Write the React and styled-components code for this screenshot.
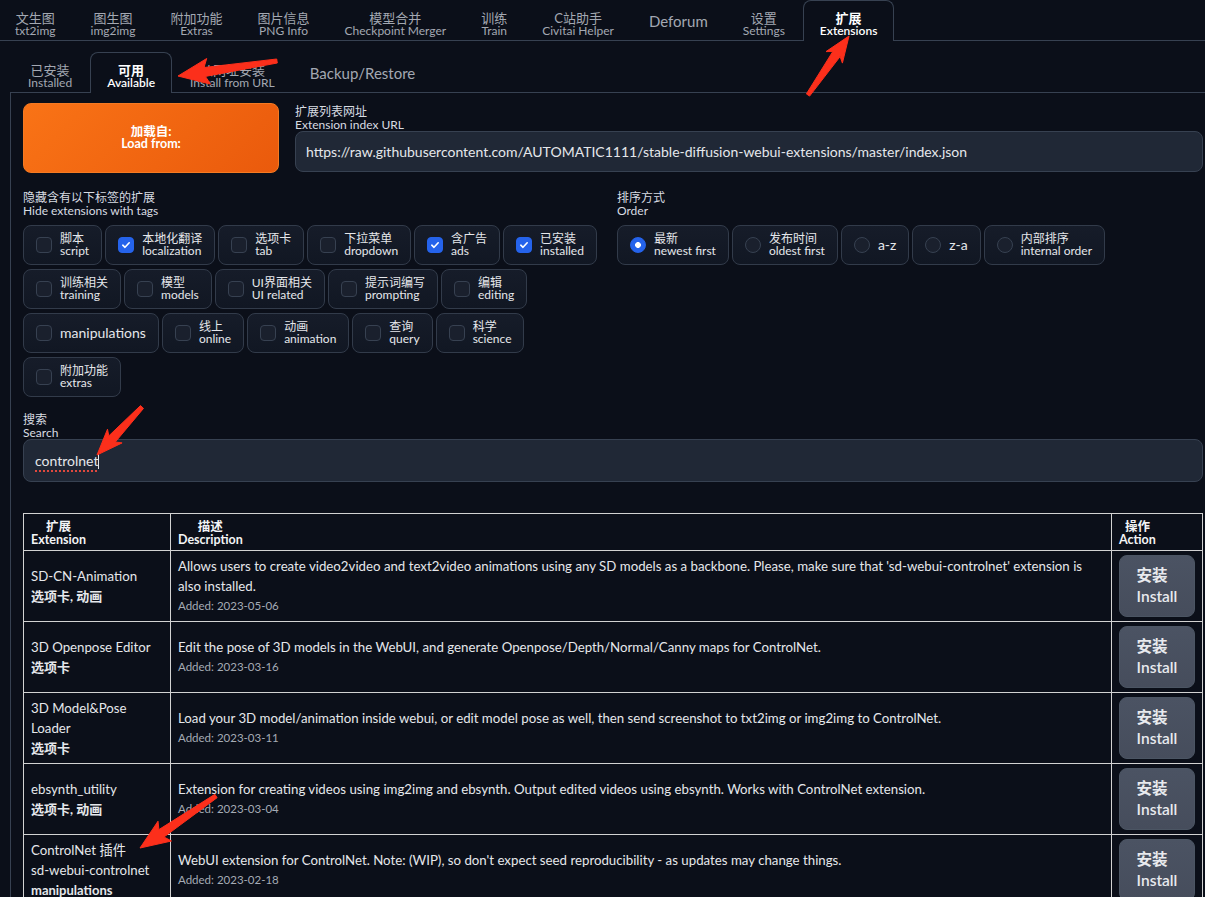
import React from 'react';
import styled, { createGlobalStyle, css } from 'styled-components';

const GlobalStyle = createGlobalStyle`
  html, body {
    margin: 0;
    padding: 0;
    background: #0b0f19;
  }
  body {
    font-family: Lato, "Noto Sans CJK SC", sans-serif;
    color: #e5e7eb;
    overflow: hidden;
  }
  * {
    box-sizing: border-box;
  }
`;

const topTabs = [
  ['文生图', 'txt2img'],
  ['图生图', 'img2img'],
  ['附加功能', 'Extras'],
  ['图片信息', 'PNG Info'],
  ['模型合并', 'Checkpoint Merger'],
  ['训练', 'Train'],
  ['C站助手', 'Civitai Helper'],
  ['Deforum'],
  ['设置', 'Settings'],
  ['扩展', 'Extensions'],
];

const subTabs = [
  ['已安装', 'Installed'],
  ['可用', 'Available'],
  ['从网址安装', 'Install from URL'],
  ['Backup/Restore'],
];

const tags = [
  ['脚本', 'script', false],
  ['本地化翻译', 'localization', true],
  ['选项卡', 'tab', false],
  ['下拉菜单', 'dropdown', false],
  ['含广告', 'ads', true],
  ['已安装', 'installed', true],
  ['训练相关', 'training', false],
  ['模型', 'models', false],
  ['UI界面相关', 'UI related', false],
  ['提示词编写', 'prompting', false],
  ['编辑', 'editing', false],
  ['manipulations', null, false],
  ['线上', 'online', false],
  ['动画', 'animation', false],
  ['查询', 'query', false],
  ['科学', 'science', false],
  ['附加功能', 'extras', false],
];

const orders = [
  ['最新', 'newest first', true],
  ['发布时间', 'oldest first', false],
  ['a-z', null, false],
  ['z-a', null, false],
  ['内部排序', 'internal order', false],
];

const extensions = [
  {
    name: ['SD-CN-Animation'],
    tags: '选项卡, 动画',
    desc: "Allows users to create video2video and text2video animations using any SD models as a backbone. Please, make sure that 'sd-webui-controlnet' extension is also installed.",
    added: '2023-05-06',
  },
  {
    name: ['3D Openpose Editor'],
    tags: '选项卡',
    desc: 'Edit the pose of 3D models in the WebUI, and generate Openpose/Depth/Normal/Canny maps for ControlNet.',
    added: '2023-03-16',
  },
  {
    name: ['3D Model&Pose Loader'],
    tags: '选项卡',
    desc: 'Load your 3D model/animation inside webui, or edit model pose as well, then send screenshot to txt2img or img2img to ControlNet.',
    added: '2023-03-11',
  },
  {
    name: ['ebsynth_utility'],
    tags: '选项卡, 动画',
    desc: 'Extension for creating videos using img2img and ebsynth. Output edited videos using ebsynth. Works with ControlNet extension.',
    added: '2023-03-04',
  },
  {
    name: ['ControlNet 插件', 'sd-webui-controlnet'],
    tags: 'manipulations',
    desc: "WebUI extension for ControlNet. Note: (WIP), so don't expect seed reproducibility - as updates may change things.",
    added: '2023-02-18',
  },
];

// annotation arrows: tail -> tip
const arrows = [
  { from: [277, 61], to: [178, 76], head: 27, wing: 13 },
  { from: [808, 95], to: [849, 36], head: 22, wing: 10 },
  { from: [142, 407], to: [97, 455], head: 22, wing: 10 },
  { from: [216, 796], to: [140, 848], head: 26, wing: 12 },
];

const arrowPoints = ({ from, to, head, wing }) => {
  const [x1, y1] = from;
  const [x2, y2] = to;
  const len = Math.hypot(x2 - x1, y2 - y1);
  const ux = (x2 - x1) / len;
  const uy = (y2 - y1) / len;
  const px = -uy;
  const py = ux;
  const bx = x2 - ux * head;
  const by = y2 - uy * head;
  const wx = bx - ux * 4;
  const wy = by - uy * 4;
  const pts = [
    [x1 + px * 2, y1 + py * 2],
    [bx + px * 4.5, by + py * 4.5],
    [wx + px * wing, wy + py * wing],
    [x2, y2],
    [wx - px * wing, wy - py * wing],
    [bx - px * 4.5, by - py * 4.5],
    [x1 - px * 2, y1 - py * 2],
  ];
  return pts.map(p => p.map(v => v.toFixed(1)).join(',')).join(' ');
};

// two-line "中文 / English" label used by tabs and chips
const Bilingual = ({ zh, en, size }) =>
  en ? (
    <>
      <Zh $size={size}>{zh}</Zh>
      <En $size={size}>{en}</En>
    </>
  ) : (
    zh
  );

const App = () => (
  <>
    <GlobalStyle />
    <Page>
      <TopNav>
        {topTabs.map(([zh, en]) => (
          <Tab key={zh} $active={zh === '扩展'} $single={!en}>
            <Bilingual zh={zh} en={en} />
          </Tab>
        ))}
      </TopNav>

      <SubArea>
        <SubNav>
          {subTabs.map(([zh, en]) => (
            <Tab key={zh} $active={zh === '可用'} $single={!en}>
              <Bilingual zh={zh} en={en} />
            </Tab>
          ))}
        </SubNav>

        <Panel>
          <LoadRow>
            <LoadButton>
              加载自:
              <br />
              Load from:
            </LoadButton>
            <Field>
              <Label>
                扩展列表网址
                <br />
                Extension index URL
              </Label>
              <TextBox>
                https://raw.githubusercontent.com/AUTOMATIC1111/stable-diffusion-webui-extensions/master/index.json
              </TextBox>
            </Field>
          </LoadRow>

          <OptionsRow>
            <div>
              <Label>
                隐藏含有以下标签的扩展
                <br />
                Hide extensions with tags
              </Label>
              <ChipWrap>
                {tags.map(([zh, en, on]) => (
                  <Chip key={zh + en}>
                    <Check $on={on}>
                      {on && (
                        <svg width="10" height="10" viewBox="0 0 10 10">
                          <polyline
                            points="1.8,5.2 4,7.3 8.2,2.8"
                            fill="none"
                            stroke="#fff"
                            strokeWidth="1.6"
                            strokeLinecap="round"
                            strokeLinejoin="round"
                          />
                        </svg>
                      )}
                    </Check>
                    <ChipText $single={!en}>
                      <Bilingual zh={zh} en={en} size="chip" />
                    </ChipText>
                  </Chip>
                ))}
              </ChipWrap>
            </div>
            <div>
              <Label>
                排序方式
                <br />
                Order
              </Label>
              <ChipWrap>
                {orders.map(([zh, en, on]) => (
                  <Chip key={zh}>
                    <Radio $on={on} />
                    <ChipText $single={!en}>
                      <Bilingual zh={zh} en={en} size="chip" />
                    </ChipText>
                  </Chip>
                ))}
              </ChipWrap>
            </div>
          </OptionsRow>

          <SearchBlock>
            <Label>
              搜索
              <br />
              Search
            </Label>
            <SearchBox>
              <Typed>controlnet</Typed>
              <Caret />
            </SearchBox>
          </SearchBlock>

          <Table>
            <colgroup>
              <col style={{ width: 147 }} />
              <col />
              <col style={{ width: 91 }} />
            </colgroup>
            <thead>
              <tr>
                <Th>
                  <HeadText>
                    扩展
                    <br />
                    Extension
                  </HeadText>
                </Th>
                <Th>
                  <HeadText>
                    描述
                    <br />
                    Description
                  </HeadText>
                </Th>
                <Th>
                  <HeadText>
                    操作
                    <br />
                    Action
                  </HeadText>
                </Th>
              </tr>
            </thead>
            <tbody>
              {extensions.map(ext => (
                <tr key={ext.added}>
                  <Td>
                    {ext.name.map(n => (
                      <div key={n}>{n}</div>
                    ))}
                    <TagLine>{ext.tags}</TagLine>
                  </Td>
                  <Td>
                    <div>{ext.desc}</div>
                    <Added>Added: {ext.added}</Added>
                  </Td>
                  <Td>
                    <InstallButton>
                      <span>
                        安装
                        <br />
                        Install
                      </span>
                    </InstallButton>
                  </Td>
                </tr>
              ))}
            </tbody>
          </Table>
        </Panel>
      </SubArea>

      <Overlay width="1205" height="897" viewBox="0 0 1205 897">
        {arrows.map((a, i) => (
          <polygon
            key={i}
            points={arrowPoints(a)}
            fill="#fc2f1b"
            stroke="#fc2f1b"
            strokeWidth="1"
            strokeLinejoin="round"
          />
        ))}
      </Overlay>
    </Page>
  </>
);

const Page = styled.div`
  position: relative;
  width: 1205px;
  min-height: 897px;
`;

const TopNav = styled.nav`
  display: flex;
  gap: 1px;
  height: 41px;
  margin-left: -2px;
  border-bottom: 1px solid #374151;
`;

const Zh = styled.span`
  display: block;
  font-size: ${p => (p.$size === 'chip' ? 12 : 13)}px;
  line-height: 12.5px;
`;

const En = styled.span`
  display: block;
  font-size: 12px;
  line-height: 12.5px;
`;

const Tab = styled.div`
  height: 41px;
  padding: ${p => (p.$single ? '0 16px' : '11px 16px 0')};
  font-size: ${p => (p.$single ? 15 : 13)}px;
  line-height: ${p => (p.$single ? '40px' : '12.5px')};
  text-align: center;
  white-space: nowrap;
  color: #a3a8b2;
  border: 1px solid transparent;
  border-bottom: none;
  border-radius: 8px 8px 0 0;

  ${p =>
    p.$active &&
    css`
      color: #ffffff;
      font-weight: 600;
      background: #0b0f19;
      border-color: #374151;
    `}
`;

const SubArea = styled.div`
  margin: 11px 0 0 10px;
`;

const SubNav = styled.nav`
  display: flex;
  gap: 1px;
  height: 41px;
  padding-left: 1px;
  border-bottom: 1px solid #374151;
`;

const Panel = styled.div`
  border-left: 1px solid #374151;
  padding: 10px 2px 0 12px;
`;

const LoadRow = styled.div`
  display: grid;
  grid-template-columns: 256px 1fr;
  column-gap: 16px;
`;

const LoadButton = styled.button`
  height: 70px;
  border: 1px solid #f57a22;
  border-radius: 8px;
  background: linear-gradient(135deg, #f97316 0%, #ea5a0c 100%);
  color: #ffffff;
  font-family: inherit;
  font-size: 12.5px;
  font-weight: 700;
  line-height: 12.5px;
  padding: 0;
`;

const Field = styled.div`
  padding-top: 3px;
`;

const Label = styled.div`
  font-size: 12px;
  line-height: 12.5px;
  color: #d8dce2;
`;

const inputBase = css`
  display: flex;
  align-items: center;
  background: #202836;
  border: 1px solid #374151;
  border-radius: 8px;
  font-size: 14px;
  color: #e5e7eb;
  white-space: nowrap;
`;

const TextBox = styled.div`
  ${inputBase}
  height: 41px;
  padding: 0 10px;
`;

const OptionsRow = styled.div`
  display: grid;
  grid-template-columns: 588px 1fr;
  column-gap: 6px;
  margin-top: 19px;
`;

const ChipWrap = styled.div`
  display: flex;
  flex-wrap: wrap;
  gap: 4px 3px;
  margin-top: 8px;
`;

const Chip = styled.label`
  display: flex;
  align-items: center;
  gap: 8px;
  height: 40px;
  padding: 0 12px;
  border: 1px solid #323b4a;
  border-radius: 8px;
  background: linear-gradient(180deg, #161c29 0%, #111723 100%);
`;

const Check = styled.span`
  display: flex;
  align-items: center;
  justify-content: center;
  width: 16px;
  height: 16px;
  border-radius: 4px;
  border: 1px solid ${p => (p.$on ? '#2563eb' : '#374151')};
  background: ${p => (p.$on ? '#2563eb' : '#1a202d')};
`;

const Radio = styled.span`
  width: 16px;
  height: 16px;
  border-radius: 50%;
  border: 1px solid ${p => (p.$on ? '#2563eb' : '#374151')};
  background: ${p =>
    p.$on ? 'radial-gradient(circle, #ffffff 0 2.6px, #2563eb 3.2px)' : '#1a202d'};
`;

const ChipText = styled.span`
  font-size: ${p => (p.$single ? 14 : 12)}px;
  line-height: 12.5px;
  color: #e5e7eb;
  white-space: nowrap;
`;

const SearchBlock = styled.div`
  margin-top: 17px;
`;

const SearchBox = styled.div`
  ${inputBase}
  height: 43px;
  padding: 0 11px;
`;

const Typed = styled.span`
  text-decoration: underline dotted #e0483e;
  text-decoration-thickness: 1.5px;
  text-underline-offset: 4px;
`;

const Caret = styled.span`
  width: 1px;
  height: 17px;
  background: #e5e7eb;
`;

const Table = styled.table`
  width: 1180px;
  margin-top: 31px;
  border-collapse: collapse;
  table-layout: fixed;
`;

const cellBorder = css`
  border: 1px solid #d2d2d2;
`;

const Th = styled.th`
  ${cellBorder}
  padding: 7px 7px 4px;
  text-align: left;
  font-size: 12.5px;
  line-height: 12.5px;
  font-weight: 700;
  color: #f3f4f6;
`;

const HeadText = styled.span`
  display: inline-block;
  text-align: center;
`;

const Td = styled.td`
  ${cellBorder}
  padding: 4px 7px;
  vertical-align: middle;
  font-size: 13.25px;
  line-height: 20px;
  color: #e5e7eb;
`;

const TagLine = styled.div`
  font-weight: 700;
  font-size: 13px;
`;

const Added = styled.div`
  font-size: 11.5px;
  line-height: 20px;
  color: #a5abb5;
`;

const InstallButton = styled.button`
  display: flex;
  align-items: center;
  justify-content: center;
  width: 76px;
  height: 62px;
  padding: 0;
  border: 1px solid #4b5563;
  border-radius: 8px;
  background: linear-gradient(180deg, #4b5363 0%, #464d5c 100%);
  color: #e8eaee;
  font-family: inherit;
  font-size: 15.5px;
  font-weight: 600;
  line-height: 21px;
  text-align: left;
`;

const Overlay = styled.svg`
  position: absolute;
  top: 0;
  left: 0;
  pointer-events: none;
`;

export default App;
